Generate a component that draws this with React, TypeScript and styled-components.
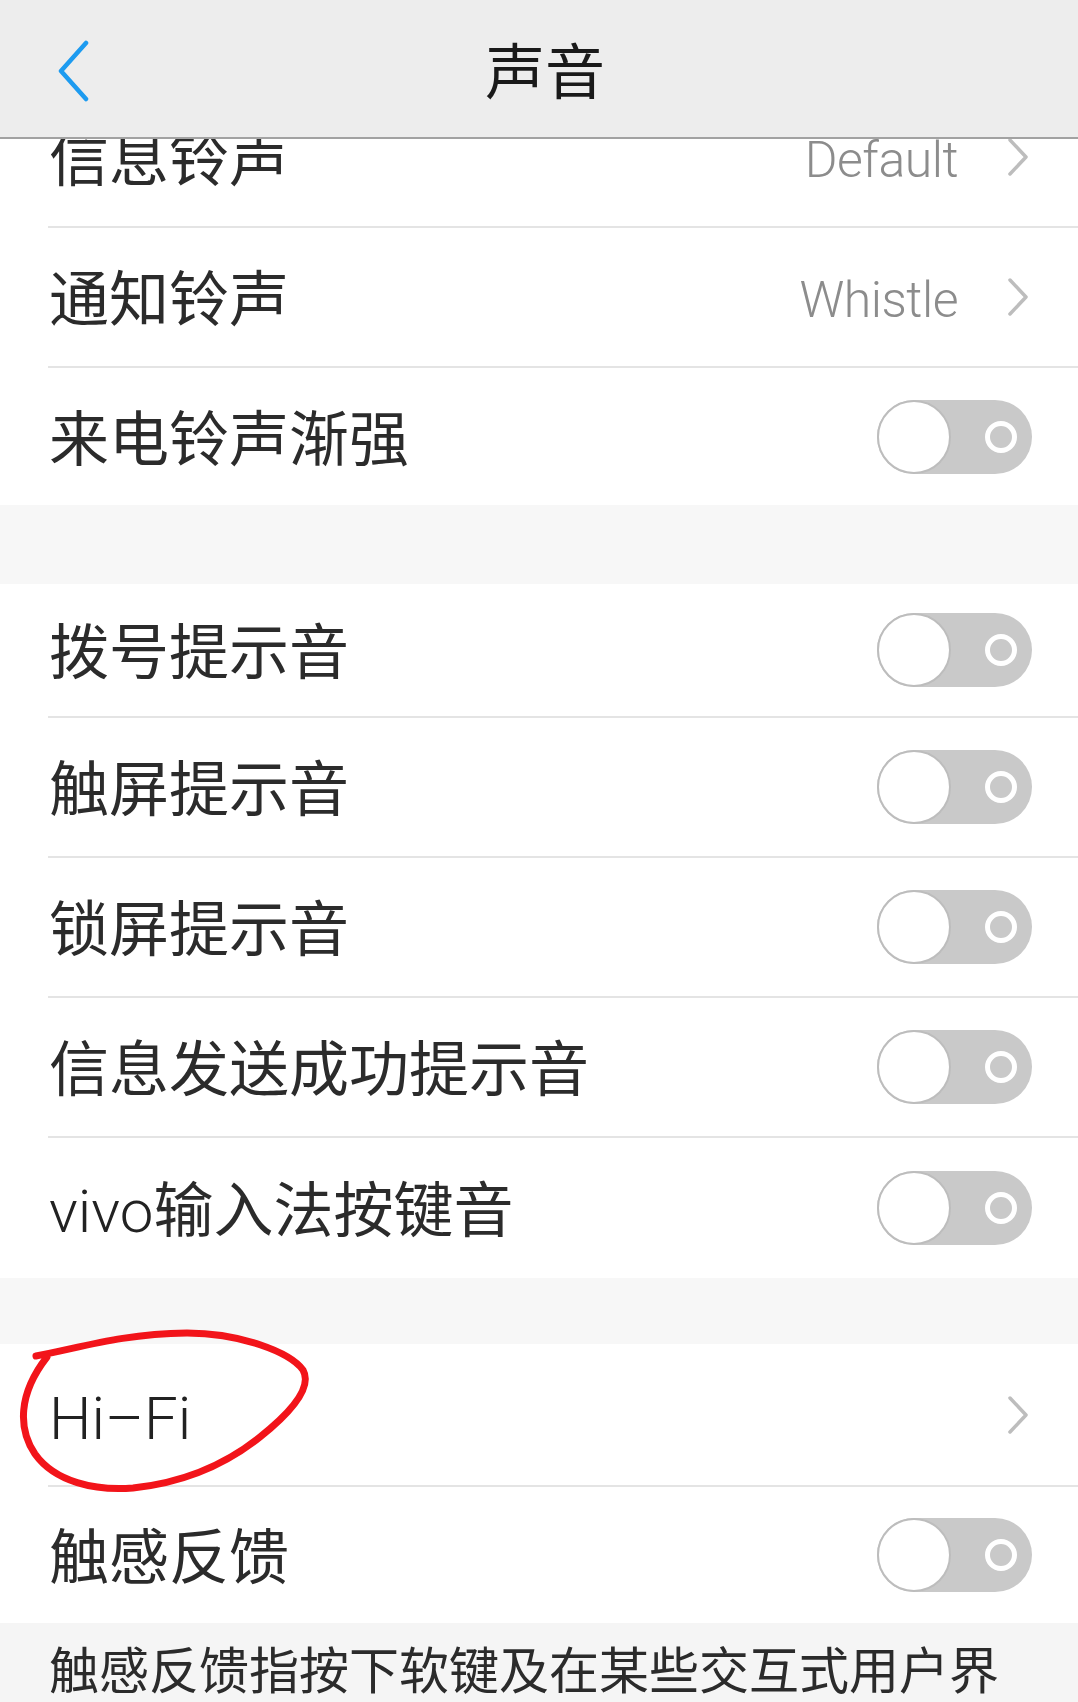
import styled, { createGlobalStyle } from 'styled-components'

const GlobalStyle = createGlobalStyle`
  html, body {
    margin: 0;
    padding: 0;
    background: #ffffff;
  }
  body {
    font-family: 'Noto Sans CJK SC', 'Noto Sans', sans-serif;
  }
`

type Item =
  | { kind: 'link'; label: string; latin?: string; value?: string; h: number; circled?: boolean }
  | { kind: 'toggle'; label: string; latin?: string; h: number }

const groups: Item[][] = [
  [
    { kind: 'link', label: '信息铃声', value: 'Default', h: 140 },
    { kind: 'link', label: '通知铃声', value: 'Whistle', h: 140 },
    { kind: 'toggle', label: '来电铃声渐强', h: 137 },
  ],
  [
    { kind: 'toggle', label: '拨号提示音', h: 134 },
    { kind: 'toggle', label: '触屏提示音', h: 140 },
    { kind: 'toggle', label: '锁屏提示音', h: 140 },
    { kind: 'toggle', label: '信息发送成功提示音', h: 140 },
    { kind: 'toggle', latin: 'vivo', label: '输入法按键音', h: 140 },
  ],
  [
    { kind: 'link', latin: 'Hi–Fi', label: '', h: 143, circled: true },
    { kind: 'toggle', label: '触感反馈', h: 136 },
  ],
]

const BackIcon = () => (
  <svg width="34" height="62" viewBox="0 0 34 62">
    <path d="M30 3 L5 31 L30 59" fill="none" stroke="#1d9bf0" strokeWidth="4.5" strokeLinecap="round" strokeLinejoin="round" />
  </svg>
)

const Chevron = () => (
  <svg width="24" height="42" viewBox="0 0 24 42">
    <path d="M4 4 L20 21 L4 38" fill="none" stroke="#bdbdbd" strokeWidth="3.5" strokeLinecap="round" strokeLinejoin="round" />
  </svg>
)

const Circle = () => (
  <Scribble width="330" height="180" viewBox="0 0 330 180">
    <path
      d="M36 32 C 80 24, 120 10, 187 9 C 240 9, 290 28, 303 46 C 312 62, 295 85, 260 113 C 230 137, 190 158, 133 164 C 95 167, 55 158, 35 130 C 18 105, 18 70, 47 33"
      fill="none"
      stroke="#f2141a"
      strokeWidth="7"
      strokeLinecap="round"
    />
  </Scribble>
)

const Switch = () => (
  <Track>
    <Knob />
    <Ring />
  </Track>
)

const App = () => {
  return (
    <Screen>
      <GlobalStyle />
      <Header>
        <Back>
          <BackIcon />
        </Back>
        <Title>声音</Title>
        <span />
      </Header>
      <Viewport>
        <Scroller>
          {groups.map((group, gi) => (
            <div key={gi}>
              {gi > 0 && <Gap $h={gi === 1 ? 79 : 66} />}
              <Group>
                {group.map((item, i) => (
                  <Row key={(item.latin ?? '') + item.label} $h={item.h}>
                    {item.kind === 'link' && item.circled && <Circle />}
                    <RowBody $last={i === group.length - 1}>
                      <Label>
                        {item.latin && <Latin>{item.latin}</Latin>}
                        {item.label}
                      </Label>
                      {item.kind === 'link' ? (
                        <Trail>
                          {item.value && <Value>{item.value}</Value>}
                          <Chevron />
                        </Trail>
                      ) : (
                        <Switch />
                      )}
                    </RowBody>
                  </Row>
                ))}
              </Group>
            </div>
          ))}
          <Note>触感反馈指按下软键及在某些交互式用户界</Note>
        </Scroller>
      </Viewport>
    </Screen>
  )
}

const Screen = styled.div`
  width: 1078px;
  height: 1702px;
  display: flex;
  flex-direction: column;
  overflow: hidden;
  background: #f5f5f5;
`
const Header = styled.header`
  flex: none;
  height: 137px;
  background: #ededed;
  border-bottom: 2px solid #a2a2a2;
  display: grid;
  grid-template-columns: 1fr auto 1fr;
  align-items: center;
  position: relative;
  z-index: 2;
`
const Back = styled.div`
  padding-left: 56px;
  padding-top: 4px;
  display: flex;
`
const Title = styled.h1`
  margin: 0;
  font-size: 60px;
  font-weight: 400;
  color: #1a1a1a;
  line-height: 1;
  padding: 0 0 2px 12px;
`
const Viewport = styled.div`
  flex: 1;
  overflow: hidden;
`
const Scroller = styled.div`
  margin-top: -51px;
`
const Group = styled.div`
  background: #ffffff;
`
const Gap = styled.div<{ $h: number }>`
  height: ${(p) => p.$h}px;
  background: #f7f7f7;
`
const Row = styled.div<{ $h: number }>`
  position: relative;
  height: ${(p) => p.$h}px;
  padding-left: 48px;
  display: flex;
`
const RowBody = styled.div<{ $last: boolean }>`
  flex: 1;
  display: flex;
  align-items: center;
  justify-content: space-between;
  padding-right: 46px;
  border-bottom: ${(p) => (p.$last ? 'none' : '2px solid #e4e4e4')};
`
const Label = styled.span`
  font-size: 60px;
  color: #2b2b2b;
  padding: 0 0 5px 1px;
  font-family: 'Noto Sans CJK SC', sans-serif;
  font-weight: 400;
`
const Latin = styled.span`
  font-family: Roboto, 'Noto Sans', sans-serif;
  font-weight: 300;
  color: #222222;
`
const Trail = styled.div`
  display: flex;
  align-items: center;
  gap: 48px;
  padding-right: 2px;
`
const Value = styled.span`
  font-family: Roboto, 'Liberation Sans', sans-serif;
  font-weight: 300;
  font-size: 50px;
  color: #8c8c8c;
  letter-spacing: -0.5px;
  padding-top: 6px;
`
const Track = styled.span`
  width: 155px;
  height: 74px;
  border-radius: 37px;
  background: #c9c9c9;
  display: flex;
  align-items: center;
  justify-content: space-between;
  padding-right: 15px;
  box-sizing: border-box;
`
const Knob = styled.span`
  width: 74px;
  height: 74px;
  border-radius: 50%;
  background: #ffffff;
  border: 2px solid #bdbdbd;
  box-sizing: border-box;
`
const Ring = styled.span`
  width: 32px;
  height: 32px;
  border-radius: 50%;
  border: 5px solid #ffffff;
  box-sizing: border-box;
`
const Scribble = styled.svg`
  position: absolute;
  left: 0;
  top: -20px;
  z-index: 1;
  pointer-events: none;
`
const Note = styled.p`
  margin: 0;
  padding: 12px 49px 40px;
  background: #f5f5f5;
  font-size: 50px;
  line-height: 1.3;
  color: #2b2b2b;
  white-space: nowrap;
`

export default App
